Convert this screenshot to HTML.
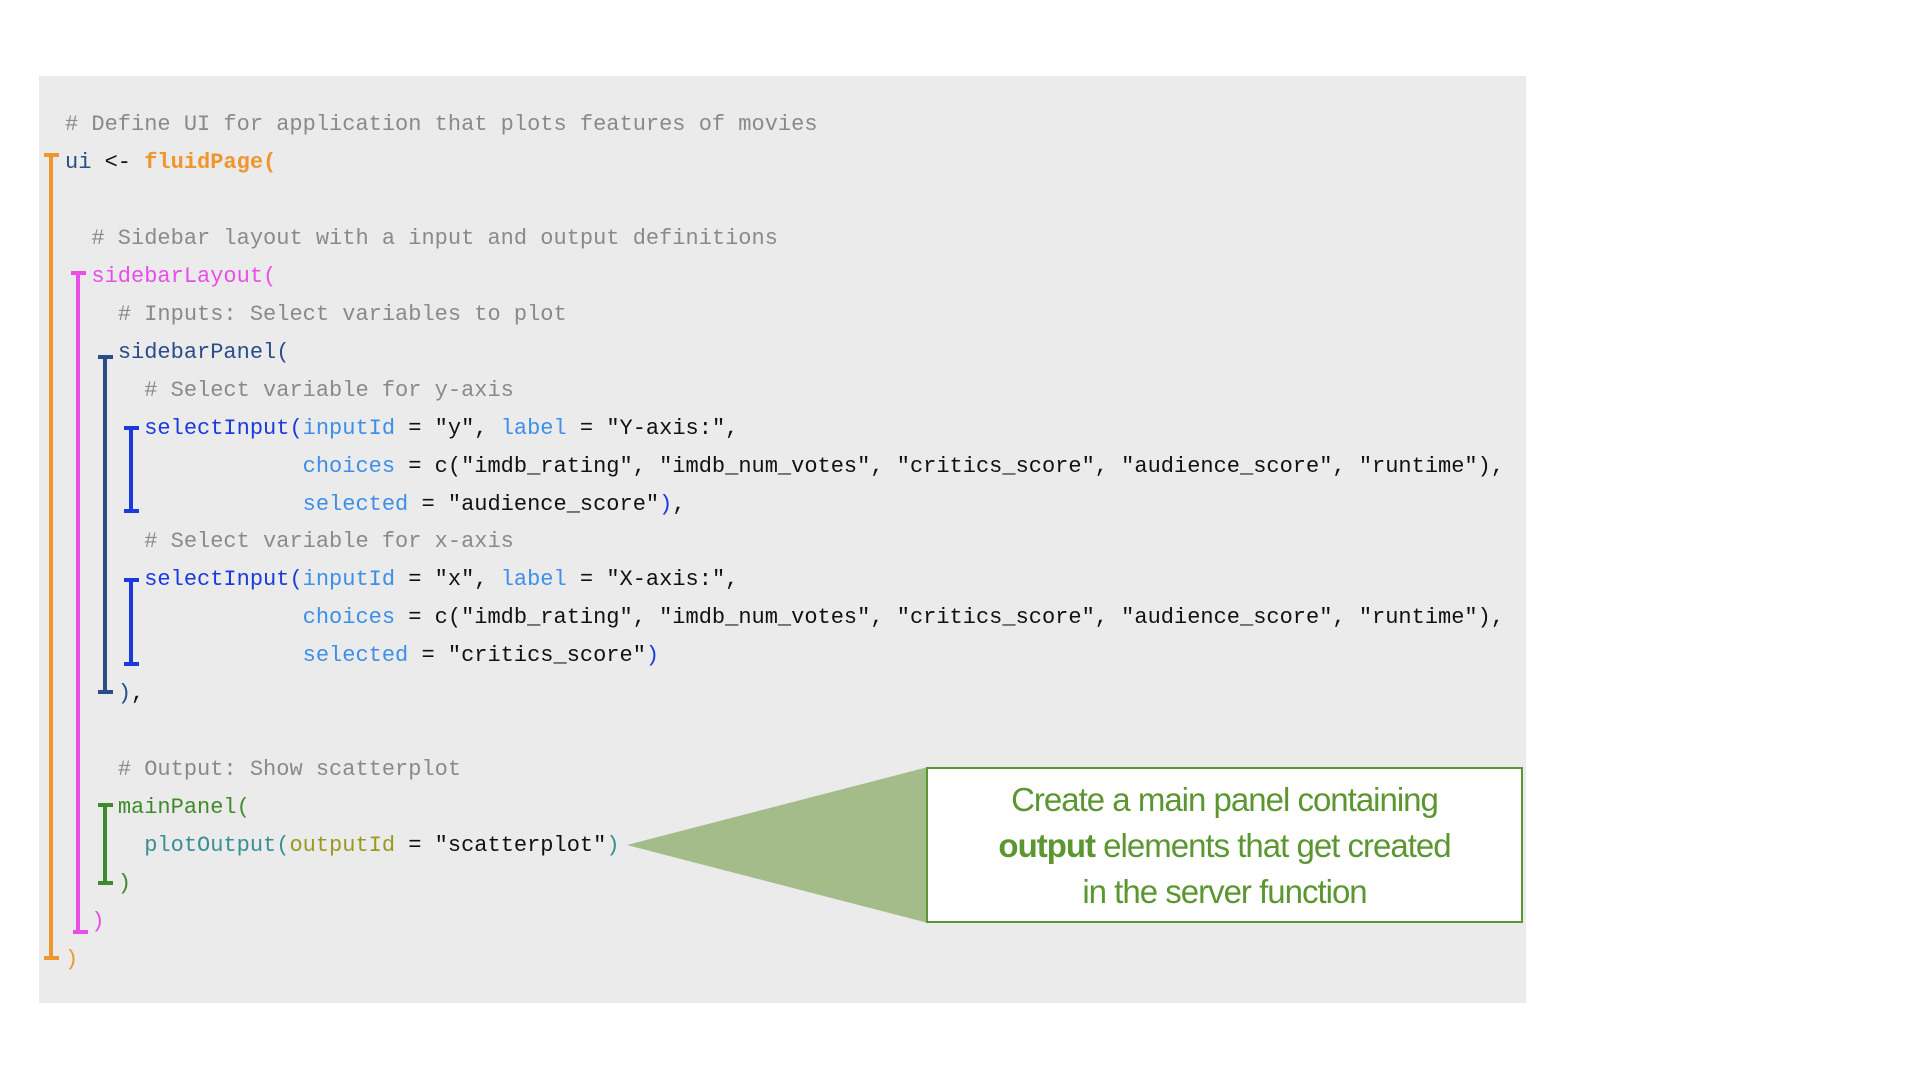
<!DOCTYPE html>
<html><head><meta charset="utf-8"><style>
body{margin:0;width:1920px;height:1080px;background:#fff;position:relative;overflow:hidden}
.gray{position:absolute;left:39px;top:76px;width:1487px;height:927px;background:#ebebeb}
.code{position:absolute;left:65px;top:106px;font-family:"Liberation Mono",monospace;font-size:22px;line-height:37.96px;white-space:pre;color:#111}
.c{color:#8a8a8a}.o{color:#f0962e}.ob{color:#f0962e;font-weight:bold}.m{color:#e84ee8}.n{color:#2a4d8a}
.b{color:#1a3ae0}.lb{color:#3d8fe8}.g{color:#3f8a2a}.t{color:#3a9090}.ol{color:#9a9a20}
.v{position:absolute;width:4px}.h{position:absolute;height:4px}
.call{position:absolute;left:926px;top:767px;border:2px solid #5b9630;background:#fff;
font-family:"Liberation Sans",sans-serif;font-size:33px;line-height:46px;color:#5b9630;text-align:center;padding-top:8px;box-sizing:border-box;width:597px;height:156px;letter-spacing:-1px}
</style></head><body>
<div class="gray"></div>
<div class="code"><span class="c"># Define UI for application that plots features of movies</span>
<span class="n">ui</span> &lt;- <span class="ob">fluidPage(</span>

  <span class="c"># Sidebar layout with a input and output definitions</span>
  <span class="m">sidebarLayout(</span>
    <span class="c"># Inputs: Select variables to plot</span>
    <span class="n">sidebarPanel(</span>
      <span class="c"># Select variable for y-axis</span>
      <span class="b">selectInput(</span><span class="lb">inputId</span> = "y", <span class="lb">label</span> = "Y-axis:",
                  <span class="lb">choices</span> = c("imdb_rating", "imdb_num_votes", "critics_score", "audience_score", "runtime"),
                  <span class="lb">selected</span> = "audience_score"<span class="b">)</span>,
      <span class="c"># Select variable for x-axis</span>
      <span class="b">selectInput(</span><span class="lb">inputId</span> = "x", <span class="lb">label</span> = "X-axis:",
                  <span class="lb">choices</span> = c("imdb_rating", "imdb_num_votes", "critics_score", "audience_score", "runtime"),
                  <span class="lb">selected</span> = "critics_score"<span class="b">)</span>
    <span class="n">)</span>,

    <span class="c"># Output: Show scatterplot</span>
    <span class="g">mainPanel(</span>
      <span class="t">plotOutput(</span><span class="ol">outputId</span> = "scatterplot"<span class="t">)</span>
    <span class="g">)</span>
  <span class="m">)</span>
<span class="o">)</span></div>

<div class="v" style="left:49px;top:154px;height:805px;background:#f0962e"></div>
<div class="h" style="left:44px;top:153px;width:15px;background:#f0962e"></div>
<div class="h" style="left:44px;top:956px;width:15px;background:#f0962e"></div>
<div class="v" style="left:76px;top:272px;height:661px;background:#e84ee8"></div>
<div class="h" style="left:71px;top:271px;width:15px;background:#e84ee8"></div>
<div class="h" style="left:73px;top:930px;width:15px;background:#e84ee8"></div>
<div class="v" style="left:103px;top:356px;height:337px;background:#2a4d8a"></div>
<div class="h" style="left:98px;top:355px;width:15px;background:#2a4d8a"></div>
<div class="h" style="left:98px;top:690px;width:15px;background:#2a4d8a"></div>
<div class="v" style="left:129px;top:426px;height:86px;background:#1a3ae0"></div>
<div class="h" style="left:124px;top:426px;width:15px;background:#1a3ae0"></div>
<div class="h" style="left:124px;top:509px;width:15px;background:#1a3ae0"></div>
<div class="v" style="left:129px;top:578px;height:87px;background:#1a3ae0"></div>
<div class="h" style="left:124px;top:578px;width:15px;background:#1a3ae0"></div>
<div class="h" style="left:124px;top:662px;width:15px;background:#1a3ae0"></div>
<div class="v" style="left:103px;top:804px;height:80px;background:#3f8a2a"></div>
<div class="h" style="left:98px;top:803px;width:15px;background:#3f8a2a"></div>
<div class="h" style="left:98px;top:881px;width:15px;background:#3f8a2a"></div>

<svg style="position:absolute;left:0;top:0" width="1920" height="1080"><polygon points="627,845 928,767 928,923" fill="#a3bc8a"/></svg>
<div class="call">Create a main panel containing<br><b>output</b> elements that get created<br>in the server function</div>
</body></html>
